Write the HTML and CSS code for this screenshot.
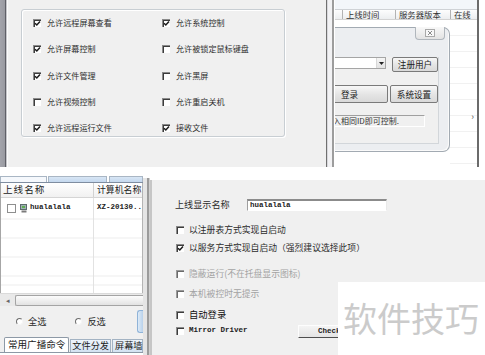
FILE: index.html
```html
<!DOCTYPE html>
<html lang="zh-CN">
<head>
<meta charset="utf-8">
<title>远程控制设置</title>
<link rel="stylesheet" href="styles.css">
</head>
<body>
<div class="page">
  <section class="top">
    <div class="perm">
      <div class="perm-edge"></div>
      <div class="perm-body">
        <div class="group">
          <div class="opt"><span class="cb"><svg viewBox="0 0 7 7"><path d="M1 3.2L2.8 5L6 1.4"/></svg></span>允许远程屏幕查看</div>
          <div class="opt"><span class="cb"><svg viewBox="0 0 7 7"><path d="M1 3.2L2.8 5L6 1.4"/></svg></span>允许系统控制</div>
          <div class="opt"><span class="cb"><svg viewBox="0 0 7 7"><path d="M1 3.2L2.8 5L6 1.4"/></svg></span>允许屏幕控制</div>
          <div class="opt"><span class="cb"></span>允许被锁定鼠标键盘</div>
          <div class="opt"><span class="cb"><svg viewBox="0 0 7 7"><path d="M1 3.2L2.8 5L6 1.4"/></svg></span>允许文件管理</div>
          <div class="opt"><span class="cb"></span>允许黑屏</div>
          <div class="opt"><span class="cb"></span>允许视频控制</div>
          <div class="opt"><span class="cb"></span>允许重启关机</div>
          <div class="opt"><span class="cb"><svg viewBox="0 0 7 7"><path d="M1 3.2L2.8 5L6 1.4"/></svg></span>允许远程运行文件</div>
          <div class="opt"><span class="cb"><svg viewBox="0 0 7 7"><path d="M1 3.2L2.8 5L6 1.4"/></svg></span>接收文件</div>
        </div>
      </div>
    </div>
    <div class="srv">
      <div class="srv-fl"></div>
      <div class="srv-main">
        <div class="srv-cap"></div>
        <div class="srv-head"><span class="h0"></span><span class="h1">上线时间</span><span class="h2">服务器版本</span><span class="h3">在线</span></div>
        <div class="srv-body">
          <div class="login">
            <div class="login-title">
              <span class="xbtn"><svg width="10" height="8" viewBox="0 0 10 8"><rect x="0.5" y="0.5" width="9" height="7" fill="#f7f7f7" stroke="#a9a9a9"/><path d="M3 2L7 6M7 2L3 6" stroke="#8a8a8a" stroke-width="1"/></svg></span>
            </div>
            <div class="login-client">
              <div class="lrow1">
                <div class="combo"><span class="combo-arrow"><svg width="5" height="3" viewBox="0 0 5 3"><path d="M0 0H5L2.5 3Z" fill="#222"/></svg></span></div>
                <button class="btn b-reg">注册用户</button>
              </div>
              <div class="lrow2">
                <button class="btn b-login">登录</button>
                <button class="btn b-set">系统设置</button>
              </div>
              <div class="status">输入相同ID即可控制.</div>
            </div>
          </div>
          <div class="srv-rest"><span class="sarrow">›</span></div>
        </div>
      </div>
      <div class="srv-fr"></div>
    </div>
  </section>

  <section class="bottom">
    <div class="host">
      <div class="htabs"><span class="htab t1"></span><span class="htab t2"></span><span class="htab t3"></span></div>
      <div class="list">
        <div class="lhead"><span class="lh1">上线名称</span><span class="lh2">计算机名称</span></div>
        <div class="lrows">
          <div class="lrow">
            <div class="lc1">
              <span class="cb2"></span>
              <svg class="pc" width="8" height="9" viewBox="0 0 8 9"><rect x="0.5" y="0.5" width="6" height="5" fill="#9fb1b3" stroke="#5d6b6d"/><rect x="2" y="2" width="3" height="2" fill="#5fae52"/><rect x="1.5" y="6.5" width="5" height="2" fill="#7b7b7b"/></svg>
              <span class="mono">hualalala</span>
            </div>
            <div class="lc2"><span class="mono">XZ-20130...</span></div>
          </div>
        </div>
      </div>
      <div class="hscroll"><span class="harrow">◂</span><span class="thumb"></span></div>
      <div class="radios">
        <span class="rad"><span class="rdot"></span>全选</span>
        <span class="rad"><span class="rdot"></span>反选</span>
        <span class="minib"></span>
      </div>
      <div class="tabs">
        <span class="tab on">常用广播命令</span>
        <span class="tab w2">文件分发</span>
        <span class="tab w3">屏幕墙</span>
      </div>
      <div class="tabpage"></div>
    </div>
    <div class="sep"></div>
    <div class="cfg">
      <div class="cfg-name"><span class="lbl">上线显示名称</span><span class="tbox">hualalala</span></div>
      <div class="crow r1"><span class="cb"></span>以注册表方式实现自启动</div>
      <div class="crow r2"><span class="cb"><svg viewBox="0 0 7 7"><path d="M1 3.2L2.8 5L6 1.4"/></svg></span>以服务方式实现自启动（强烈建议选择此项）</div>
      <div class="crow r3 dis"><span class="cb"></span>隐蔽运行(不在托盘显示图标)</div>
      <div class="crow r4 dis"><span class="cb"></span>本机被控时无提示</div>
      <div class="crow r5 strong"><span class="cb"></span>自动登录</div>
      <div class="crow r6">
        <span class="cell"><span class="cb"></span><span class="mono">Mirror Driver</span></span>
        <button class="btn-check">Check</button>
      </div>
    </div>
  </section>

  <div class="wm">软件技巧</div>
</div>
</body>
</html>
```

FILE: styles.css
```css
* { box-sizing: border-box; margin: 0; padding: 0; }
html, body { width: 485px; height: 355px; overflow: hidden; background: #fff; }
body { font-family: "Noto Sans CJK SC", "Noto Sans", sans-serif; color: #2a2a2a; line-height: 1; }
svg { display: block; }
button { font-family: inherit; color: inherit; cursor: default; }

.page { position: relative; width: 485px; height: 355px; display: flex; flex-direction: column; }

/* classic sunken checkbox */
.cb { flex: none; width: 8px; height: 8px; background: #fff; border-top: 1px solid #8a8a8a; border-left: 1px solid #8a8a8a; box-shadow: inset 1px 1px 0 #3c3c3c; display: flex; align-items: center; justify-content: center; }
.cb svg { width: 7px; height: 7px; fill: none; stroke: #1c1c1c; stroke-width: 1.5; }

/* ---------- top ---------- */
.top { flex: none; height: 167px; display: flex; }

.perm { width: 327px; flex: none; display: flex; background: #f0f0f0; border-right: 1px solid #707070; }
.perm-edge { width: 8px; flex: none; background: linear-gradient(to right, #a3a4ab 0, #999aa1 5px, #5f6067 5px, #5f6067 6px, #c6c6ca 6px, #c6c6ca 7px, #fbfbfb 7px); }
.perm-body { flex: 1; padding: 9px 0 0 13px; }
.group { width: 264px; height: 128px; border: 1px solid #c8ced3; border-radius: 3px; box-shadow: inset 1px 1px 0 #fff, 1px 1px 0 #fff; display: grid; grid-template-columns: 129px 1fr; grid-auto-rows: 26.25px; align-items: center; padding-left: 11px; }
.opt { display: flex; align-items: center; gap: 6px; font-size: 8.1px; white-space: nowrap; color: #2e2e2e; }

.srv { flex: 1; display: flex; background: #fff; }
.srv-fl { width: 8px; flex: none; background: linear-gradient(to right, #d8d8dc 0, #d8d8dc 1px, #f2f2f4 1px, #f2f2f4 5px, #9d9d9d 5px, #9d9d9d 7px, #fff 7px); }
.srv-main { width: 142px; flex: none; display: flex; flex-direction: column; overflow: hidden; }
.srv-cap { height: 9px; flex: none; background: #f3f6fa; }
.srv-head { height: 11px; flex: none; display: flex; background: linear-gradient(#fdfdfd, #eceef0); border-top: 1px solid #cfd2d6; border-bottom: 1px solid #d3d3d3; font-size: 8.4px; line-height: 9px; color: #333; }
.srv-head span { flex: none; border-right: 1px solid #b3b3b3; padding-left: 3px; white-space: nowrap; }
.srv-head .h0 { width: 8px; }
.srv-head .h1 { width: 53px; }
.srv-head .h2 { width: 55px; }
.srv-head .h3 { flex: 1; border-right: 0; }
.srv-body { flex: 1; display: flex; background: #fff; }
.srv-fr { flex: 1; background: linear-gradient(to right, #6b6b6b 0, #6b6b6b 2px, #fff 2px); }

.login { flex: none; width: 155px; height: 125px; margin-left: -40px; margin-top: 7px; display: flex; flex-direction: column; background: #eceef1; border: 1px solid #a2aab2; border-left: 0; border-radius: 0 7px 7px 0; box-shadow: inset -1px -1px 0 #fafafa; }
.login-title { height: 29px; flex: none; display: flex; justify-content: flex-end; padding-right: 4px; }
.xbtn { width: 30px; height: 13px; margin-top: -1px; border: 1px solid #b0b6bc; border-top: 0; border-radius: 0 0 4px 4px; background: linear-gradient(#f8f8f8, #e3e3e3); display: flex; align-items: center; justify-content: center; }
.login-client { flex: 1; margin: 0 10px 7px 0; background: #f0f0f0; border-right: 1px solid #d2d6da; border-bottom: 1px solid #d2d6da; padding-left: 16px; display: flex; flex-direction: column; }
.lrow1 { display: flex; align-items: flex-start; height: 15px; }
.combo { width: 75px; height: 12px; background: #fff; border: 1px solid #a5a5a5; display: flex; justify-content: flex-end; }
.combo-arrow { width: 9px; border-left: 1px solid #d8d8d8; background: linear-gradient(#f5f5f5, #e2e2e2); display: flex; align-items: center; justify-content: center; }
.btn { height: 15px; border: 1px solid #7a7a7a; border-radius: 2px; background: linear-gradient(#f7f7f7, #e4e4e4 55%, #d9d9d9); font-size: 8.6px; line-height: 1; color: #222; }
.b-reg { width: 46px; margin-left: 6px; }
.lrow2 { display: flex; margin-top: 13px; }
.lrow2 .btn { height: 18px; }
.b-login { width: 77px; }
.b-set { width: 48px; margin-left: 2px; }
.status { margin-top: 12px; width: 114px; height: 12px; border-top: 1px solid #a0a0a0; border-left: 1px solid #a0a0a0; border-right: 1px solid #fff; border-bottom: 1px solid #fff; font-size: 8px; line-height: 10px; padding-left: 13px; white-space: nowrap; overflow: hidden; color: #333; }
.srv-rest { flex: 1; display: flex; justify-content: flex-end; align-items: flex-start; padding: 92px 3px 0 0; background: repeating-linear-gradient(to bottom, #fff 0, #fff 15px, #f1f1f1 15px, #f1f1f1 16px); }
.sarrow { font-size: 9px; color: #555; }

/* ---------- bottom ---------- */
.bottom { flex: 1; display: flex; background: #fff; }

.host { width: 143px; flex: none; margin-top: 9px; display: flex; flex-direction: column; background: #f0f0f0; }
.htabs { height: 7px; flex: none; display: flex; background: #fff; border-bottom: 1px solid #7f8da0; }
.htab { border: 1px solid #a9b6c4; border-bottom: 0; }
.htab.t1 { width: 47px; background: #f5f8fc; }
.htab.t2 { width: 60px; margin-left: 1px; background: linear-gradient(#d8e6f5, #c4d8ee); }
.htab.t3 { width: 34px; margin-left: 2px; background: linear-gradient(#d8e6f5, #c4d8ee); }

.list { height: 110px; flex: none; display: flex; flex-direction: column; background: #fff; border-left: 1px solid #a6a6a6; border-right: 1px solid #b4b4b4; }
.lhead { height: 15px; flex: none; display: flex; background: linear-gradient(#fff, #f1f1f1); border-bottom: 1px solid #d5d5d5; font-size: 9.6px; color: #222; }
.lhead span { display: flex; align-items: center; padding-left: 2px; white-space: nowrap; }
.lh1 { width: 93px; flex: none; border-right: 1px solid #d2d2d2; letter-spacing: 1px; }
.lh2 { flex: 1; padding-left: 3px !important; font-size: 8.9px; }
.lrows { flex: 1; background:
  linear-gradient(to right, transparent 92px, #e2e2e2 92px, #e2e2e2 93px, transparent 93px),
  repeating-linear-gradient(to bottom, transparent 0, transparent 8.5px, #ececec 8.5px, #ececec 9.5px);
  background-position: 0 0, 0 2.5px; }
.lrow { height: 20px; display: flex; background: #fff; }
.lc1 { width: 93px; flex: none; display: flex; align-items: center; padding-left: 6px; border-right: 1px solid #e2e2e2; }
.cb2 { width: 9px; height: 9px; border: 1px solid #8e8f8f; background: #fff; flex: none; }
.pc { margin-left: 4px; flex: none; }
.lc1 .mono { margin-left: 2px; }
.lc2 { flex: 1; display: flex; align-items: center; padding-left: 3px; white-space: nowrap; }
.mono { font-family: "Liberation Mono", monospace; font-weight: bold; font-size: 7.5px; color: #222; white-space: nowrap; }

.hscroll { height: 13px; flex: none; display: flex; align-items: center; background: #e9e9e9; border-top: 1px solid #dadada; }
.harrow { width: 15px; text-align: center; font-size: 7px; color: #666; }
.thumb { flex: 1; height: 11px; border: 1px solid #a4a4a4; border-right: 0; border-radius: 2px 0 0 2px; background: linear-gradient(#fcfcfc, #e2e2e2); }

.radios { height: 31px; flex: none; display: flex; align-items: center; padding-left: 16px; font-size: 9.2px; color: #2a2a2a; }
.rad { display: flex; align-items: center; gap: 5px; }
.rad + .rad { margin-left: 29px; }
.rdot { width: 7px; height: 7px; border-radius: 50%; border: 1px solid; border-color: #6d6d6d #f6f6f6 #f6f6f6 #6d6d6d; background: #fff; }
.minib { margin-left: auto; width: 6px; height: 23px; background: linear-gradient(to right, #dceaf7, #b8d1eb); border: 1px solid #8fb3d8; border-right: 0; border-radius: 3px 0 0 3px; }

.tabs { height: 15px; flex: none; display: flex; align-items: flex-end; padding-left: 4px; font-size: 9.2px; color: #222; }
.tab { height: 13px; display: flex; align-items: center; justify-content: center; white-space: nowrap; border: 1px solid #a3b3c3; border-bottom: 0; background: linear-gradient(#eef4fb, #d3e2f2); margin-left: 1px; }
.tab.on { width: 66px; height: 15px; margin-left: 0; background: #fff; border-color: #8d99a6; border-radius: 2px 2px 0 0; font-size: 9.6px; }
.tab.w2 { width: 41px; }
.tab.w3 { width: 31px; justify-content: flex-start; padding-left: 2px; }
.tabpage { flex: 1; background: #fff; border-top: 1px solid #8d99a6; }

.sep { width: 7px; flex: none; margin-top: 11px; background: linear-gradient(to right, #e5e5e5 0, #e5e5e5 4px, #9b9b9b 4px, #9b9b9b 6px, #cfcfcf 6px); }

.cfg { flex: 1; margin-top: 13px; display: flex; flex-direction: column; background: #f0f0f0; border-left: 2px solid #c6c6c6; padding-left: 23px; font-size: 8.8px; color: #2c2c2c; }
.cfg-name { margin-top: 19px; height: 12px; display: flex; align-items: center; }
.lbl { width: 72px; flex: none; font-size: 9.1px; white-space: nowrap; }
.tbox { width: 140px; height: 12px; display: flex; align-items: center; padding-left: 2px; background: #fff; border-top: 2px solid #8b8b8b; border-left: 1px solid #9f9f9f; border-right: 1px solid #e9e9e9; border-bottom: 1px solid #fff; font-family: "Liberation Mono", monospace; font-weight: bold; font-size: 7.5px; color: #222; }
.crow { height: 14px; display: flex; align-items: center; gap: 5px; padding-left: 1px; white-space: nowrap; }
.r1 { margin-top: 12px; }
.r2 { margin-top: 4px; }
.r3 { margin-top: 12px; }
.r4 { margin-top: 6px; }
.r5 { margin-top: 7px; }
.r6 { margin-top: 2px; display: grid; grid-template-columns: 117px auto; align-items: center; }
.cell { display: flex; align-items: center; gap: 5px; }
.dis { color: #a3a3a3; }
.dis .cb { border-color: #9a9a9a; box-shadow: inset 1px 1px 0 #6a6a6a; }
.strong { color: #111; font-size: 9.3px; }
.btn-check { width: 45px; height: 13px; border: 1px solid; border-color: #fdfdfd #6a6a6a #4e4e4e #fdfdfd; border-right: 0; background: linear-gradient(#f4f4f4, #e4e4e4); font-family: "Liberation Mono", monospace; font-weight: bold; font-size: 7.5px; text-align: left; padding-left: 19px; color: #222; white-space: nowrap; }

.wm { position: absolute; left: 338px; top: 282px; width: 147px; height: 73px; background: #fff; padding-left: 5px; font-size: 34px; line-height: 71px; color: #cbcbcb; white-space: nowrap; }
```
